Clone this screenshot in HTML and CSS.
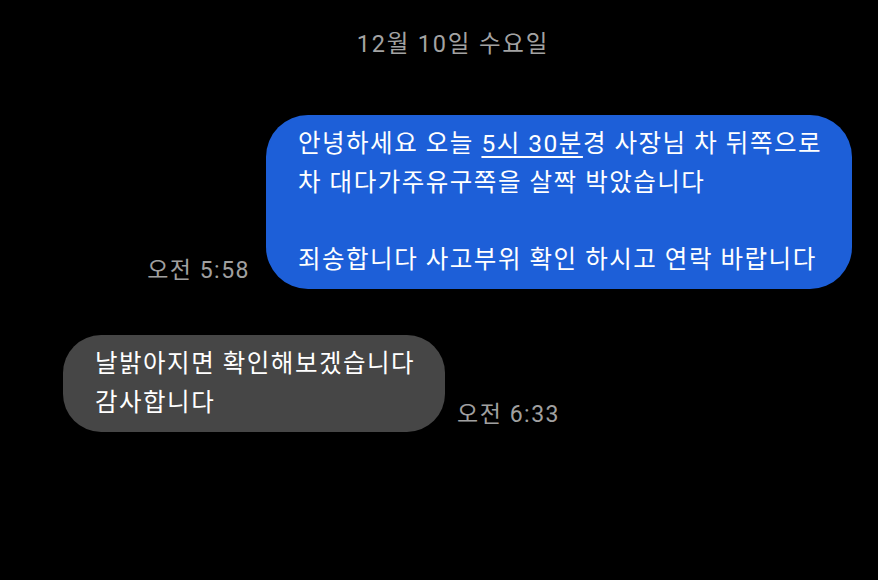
FILE: index.html
```html
<!DOCTYPE html>
<html lang="ko">
<head>
  <meta charset="UTF-8" />
  <meta name="viewport" content="width=device-width, initial-scale=1" />
  <title>메시지</title>
  <link rel="stylesheet" href="styles.css">
</head>
<body>
  <div class="chat">
    <div class="date">12월 10일 수요일</div>
    <div class="row sent">
      <span class="time">오전 5:58</span>
      <div class="bubble blue">안녕하세요 오늘 <u>5시 30분</u>경 사장님 차 뒤쪽으로<br>차 대다가주유구쪽을 살짝 박았습니다<br><br>죄송합니다 사고부위 확인 하시고 연락 바랍니다</div>
    </div>
    <div class="row received">
      <div class="bubble gray">날밝아지면 확인해보겠습니다<br>감사합니다</div>
      <span class="time">오전 6:33</span>
    </div>
  </div>
</body>
</html>
```

FILE: styles.css
```css
body {
  margin: 0;
  background: #000;
  font-family: Roboto, 'Noto Sans CJK KR', 'Noto Sans', sans-serif;
  color: #fff;
}
.chat {
  display: flex;
  flex-direction: column;
  padding-top: 28px;
}
.date {
  text-align: center;
  color: #a3a3a3;
  font-size: 23.5px;
  line-height: 32px;
  letter-spacing: 1.8px;
  padding-left: 28px;
  margin-bottom: 55px;
}
.row {
  display: flex;
  align-items: flex-end;
  gap: 16px;
}
.sent { justify-content: flex-end; padding-right: 26px; }
.received { padding-left: 63px; margin-top: 46px; }
.bubble {
  font-size: 24.5px;
  line-height: 38.5px;
  letter-spacing: 1.5px;
  padding: 10px 30px 10px 32px;
  border-radius: 42px;
  white-space: nowrap;
}
.bubble u { text-underline-offset: 4px; text-decoration-thickness: 2px; }
.blue { background: #1d5fd8; }
.gray { background: #464646; border-radius: 38px; }
.time {
  color: #a0a0a0;
  font-size: 23px;
  line-height: 30px;
  letter-spacing: 1.5px;
  padding-bottom: 3px;
}
.received .time { padding-bottom: 2px; margin-left: -4px; }
```
